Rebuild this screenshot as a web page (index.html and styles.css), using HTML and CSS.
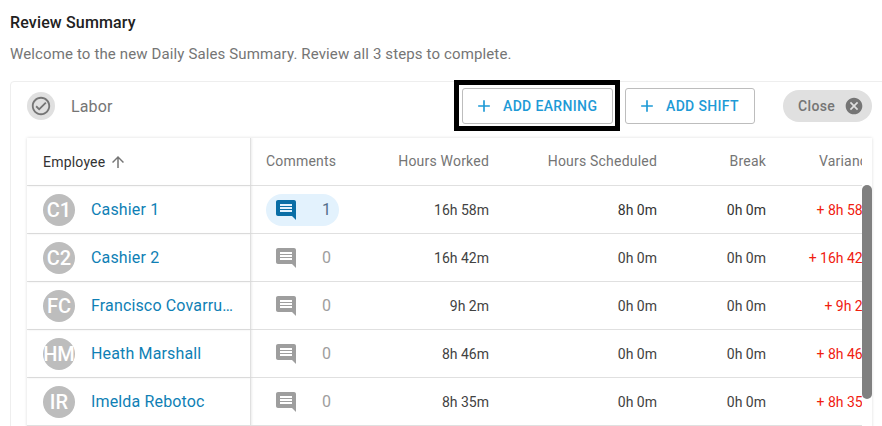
FILE: index.html
```html
<!DOCTYPE html>
<html lang="en">
<head>
<meta charset="utf-8">
<title>Review Summary</title>
<link rel="stylesheet" href="styles.css">
</head>
<body>
<main class="page">
  <h1 class="title">Review Summary</h1>
  <p class="subtitle">Welcome to the new Daily Sales Summary. Review all 3 steps to complete.</p>
  <section class="card">
    <header class="card-head">
      <span class="status"><svg class="status-icon" viewBox="0 0 24 24"><path d="M12 2C6.48 2 2 6.48 2 12s4.48 10 10 10 10-4.48 10-10S17.52 2 12 2zm0 18c-4.41 0-8-3.59-8-8s3.59-8 8-8 8 3.59 8 8-3.59 8-8 8zm4.59-12.42L10 14.17l-2.59-2.58L6 13l4 4 8-8z"/></svg></span>
      <span class="card-label">Labor</span>
      <div class="focus-ring">
        <button class="btn btn-earning"><svg class="btn-icon" viewBox="0 0 24 24"><path d="M19 13h-6v6h-2v-6H5v-2h6V5h2v6h6v2z"/></svg>ADD EARNING</button>
      </div>
      <button class="btn btn-shift"><svg class="btn-icon" viewBox="0 0 24 24"><path d="M19 13h-6v6h-2v-6H5v-2h6V5h2v6h6v2z"/></svg>ADD SHIFT</button>
      <button class="close">Close<svg class="close-icon" viewBox="0 0 24 24"><path d="M12 2C6.47 2 2 6.47 2 12s4.47 10 10 10 10-4.47 10-10S17.53 2 12 2zm5 13.59L15.59 17 12 13.41 8.41 17 7 15.59 10.59 12 7 8.41 8.41 7 12 10.59 15.59 7 17 8.41 13.41 12 17 15.59z"/></svg></button>
    </header>
    <div class="table-wrap">
      <div class="table-clip">
        <table class="grid">
          <colgroup><col class="c-emp"><col class="c-com"><col class="c-hw"><col class="c-hs"><col class="c-br"><col class="c-va"></colgroup>
          <thead>
            <tr>
              <th class="emp-head"><span class="emp-sort">Employee<svg class="sort-icon" viewBox="0 0 24 24"><path d="M4 12l1.41 1.41L11 7.83V20h2V7.83l5.58 5.59L20 12l-8-8-8 8z"/></svg></span></th>
              <th class="com-head">Comments</th>
              <th>Hours Worked</th>
              <th>Hours Scheduled</th>
              <th>Break</th>
              <th>Variance</th>
            </tr>
          </thead>
          <tbody>
            <tr>
              <td class="emp"><div class="person"><span class="avatar">C1</span><a class="name">Cashier 1</a></div></td>
              <td class="com"><div class="pill on"><svg class="chat" viewBox="0 0 24 24"><path d="M21.99 4c0-1.1-.89-2-1.99-2H4c-1.1 0-2 .9-2 2v12c0 1.1.9 2 2 2h14l4 4-.01-18zM18 14H6v-2h12v2zm0-3H6V9h12v2zm0-3H6V6h12v2z"/></svg><span class="count">1</span></div></td>
              <td>16h 58m</td><td class="dark">8h 0m</td><td class="dark">0h 0m</td><td class="over">+ 8h 58m</td>
            </tr>
            <tr>
              <td class="emp"><div class="person"><span class="avatar">C2</span><a class="name">Cashier 2</a></div></td>
              <td class="com"><div class="pill"><svg class="chat" viewBox="0 0 24 24"><path d="M21.99 4c0-1.1-.89-2-1.99-2H4c-1.1 0-2 .9-2 2v12c0 1.1.9 2 2 2h14l4 4-.01-18zM18 14H6v-2h12v2zm0-3H6V9h12v2zm0-3H6V6h12v2z"/></svg><span class="count">0</span></div></td>
              <td>16h 42m</td><td>0h 0m</td><td>0h 0m</td><td class="over">+ 16h 42m</td>
            </tr>
            <tr>
              <td class="emp"><div class="person"><span class="avatar">FC</span><a class="name">Francisco Covarrubias</a></div></td>
              <td class="com"><div class="pill"><svg class="chat" viewBox="0 0 24 24"><path d="M21.99 4c0-1.1-.89-2-1.99-2H4c-1.1 0-2 .9-2 2v12c0 1.1.9 2 2 2h14l4 4-.01-18zM18 14H6v-2h12v2zm0-3H6V9h12v2zm0-3H6V6h12v2z"/></svg><span class="count">0</span></div></td>
              <td>9h 2m</td><td>0h 0m</td><td>0h 0m</td><td class="over">+ 9h 2m</td>
            </tr>
            <tr>
              <td class="emp"><div class="person"><span class="avatar">HM</span><a class="name">Heath Marshall</a></div></td>
              <td class="com"><div class="pill"><svg class="chat" viewBox="0 0 24 24"><path d="M21.99 4c0-1.1-.89-2-1.99-2H4c-1.1 0-2 .9-2 2v12c0 1.1.9 2 2 2h14l4 4-.01-18zM18 14H6v-2h12v2zm0-3H6V9h12v2zm0-3H6V6h12v2z"/></svg><span class="count">0</span></div></td>
              <td>8h 46m</td><td>0h 0m</td><td>0h 0m</td><td class="over">+ 8h 46m</td>
            </tr>
            <tr>
              <td class="emp"><div class="person"><span class="avatar">IR</span><a class="name">Imelda Rebotoc</a></div></td>
              <td class="com"><div class="pill"><svg class="chat" viewBox="0 0 24 24"><path d="M21.99 4c0-1.1-.89-2-1.99-2H4c-1.1 0-2 .9-2 2v12c0 1.1.9 2 2 2h14l4 4-.01-18zM18 14H6v-2h12v2zm0-3H6V9h12v2zm0-3H6V6h12v2z"/></svg><span class="count">0</span></div></td>
              <td>8h 35m</td><td>0h 0m</td><td>0h 0m</td><td class="over">+ 8h 35m</td>
            </tr>
          </tbody>
        </table>
      </div>
      <div class="scroll-thumb"></div>
    </div>
  </section>
</main>
</body>
</html>
```
FILE: styles.css
```css
* { box-sizing: border-box; }
html, body { margin: 0; height: 100%; overflow: hidden; background: #fff; }
body { font-family: Roboto, "Liberation Sans", sans-serif; color: #424242; }
.page { padding: 14px 0 0 10px; width: 889px; }
.title { margin: 0; font-size: 16px; line-height: 17px; font-weight: 500; color: #212121; letter-spacing: .15px; }
.subtitle { margin: 15px 0 0; font-size: 15px; line-height: 17px; color: #757575; letter-spacing: .13px; }
.card { margin-top: 18px; width: 879px; border: 1px solid #eee; border-radius: 4px 4px 0 0; padding: 0 16px; }
.card-head { display: flex; align-items: center; height: 56px; padding-bottom: 8px; }
.status { display: flex; align-items: center; justify-content: center; width: 28px; height: 28px; border-radius: 50%; background: #e0e0e0; flex: none; }
.status-icon { width: 22px; height: 22px; fill: #757575; }
.card-label { margin-left: 16px; font-size: 16px; letter-spacing: .15px; color: #757575; }
.focus-ring { margin-left: auto; margin-top: -1px; border: 5px solid #000; padding: 3px 2px 2px 3px; }
.btn { display: flex; align-items: center; height: 36px; background: #fff; border: 1px solid #bdbdbd; border-radius: 3px; font: 500 14px Roboto, sans-serif; letter-spacing: .35px; color: #1e9ad6; padding: 0 0 0 11px; white-space: nowrap; }
.btn-earning { width: 151px; }
.btn-shift { width: 130px; margin-left: 5px; }
.btn-icon { width: 20px; height: 20px; fill: #1e9ad6; margin-right: 9px; flex: none; }
.close { display: flex; align-items: center; justify-content: space-between; width: 89px; height: 32px; margin-left: 28px; padding: 0 8px 0 15px; border: 0; border-radius: 16px; background: #e0e0e0; font: 500 14px Roboto, sans-serif; letter-spacing: .35px; color: #757575; }
.close-icon { width: 20px; height: 20px; fill: #757575; flex: none; }
.table-wrap { position: relative; width: 845px; height: 300px; box-shadow: 0 0 3px rgba(0,0,0,.14); }
.table-clip { width: 835px; height: 100%; overflow: hidden; }
.grid { table-layout: fixed; width: 848px; border-collapse: separate; border-spacing: 0; font-size: 14px; }
.c-emp { width: 224px; } .c-com { width: 109px; } .c-hw { width: 129px; } .c-hs { width: 168px; } .c-br { width: 109px; } .c-va { width: 109px; }
th, td { height: 48px; padding: 0; text-align: right; border-bottom: 1px solid #e0e0e0; white-space: nowrap; }
th { font-weight: 400; color: #757575; letter-spacing: .2px; padding-bottom: 2px; }
td { color: #424242; }
.dark { color: #333; }
.emp-head, .emp { text-align: left; border-right: 1px solid #e0e0e0; box-shadow: 1px 0 2px rgba(0,0,0,.08); }
.emp-head { padding: 0 0 0 16px; }
.emp-sort { display: inline-flex; align-items: center; gap: 4px; color: #333; }
.sort-icon { width: 18px; height: 18px; fill: #757575; }
.com-head { text-align: left; padding-left: 15px; }
.com { text-align: left; padding-left: 15px; }
.person { display: flex; align-items: center; padding-left: 16px; }
.avatar { display: flex; align-items: center; justify-content: center; width: 32px; height: 32px; border-radius: 50%; background: #bdbdbd; color: #fff; font-size: 20px; font-weight: 500; overflow: hidden; flex: none; }
.name { margin-left: 16px; max-width: 143px; overflow: hidden; text-overflow: ellipsis; font-size: 16px; letter-spacing: .15px; color: #0f7fb5; }
.pill { display: flex; align-items: center; width: 73px; height: 32px; border-radius: 16px; padding-left: 8px; }
.pill.on { background: #e3f2fd; }
.chat { width: 24px; height: 24px; fill: #9e9e9e; flex: none; }
.on .chat { fill: #0a6ea6; }
.count { margin-left: 24px; font-size: 16px; color: #9e9e9e; }
.on .count { color: #546e8a; }
.over { color: #f02010; }
.scroll-thumb { position: absolute; right: 0; top: 47px; width: 10px; height: 214px; border-radius: 5px; background: #808080; }
```
